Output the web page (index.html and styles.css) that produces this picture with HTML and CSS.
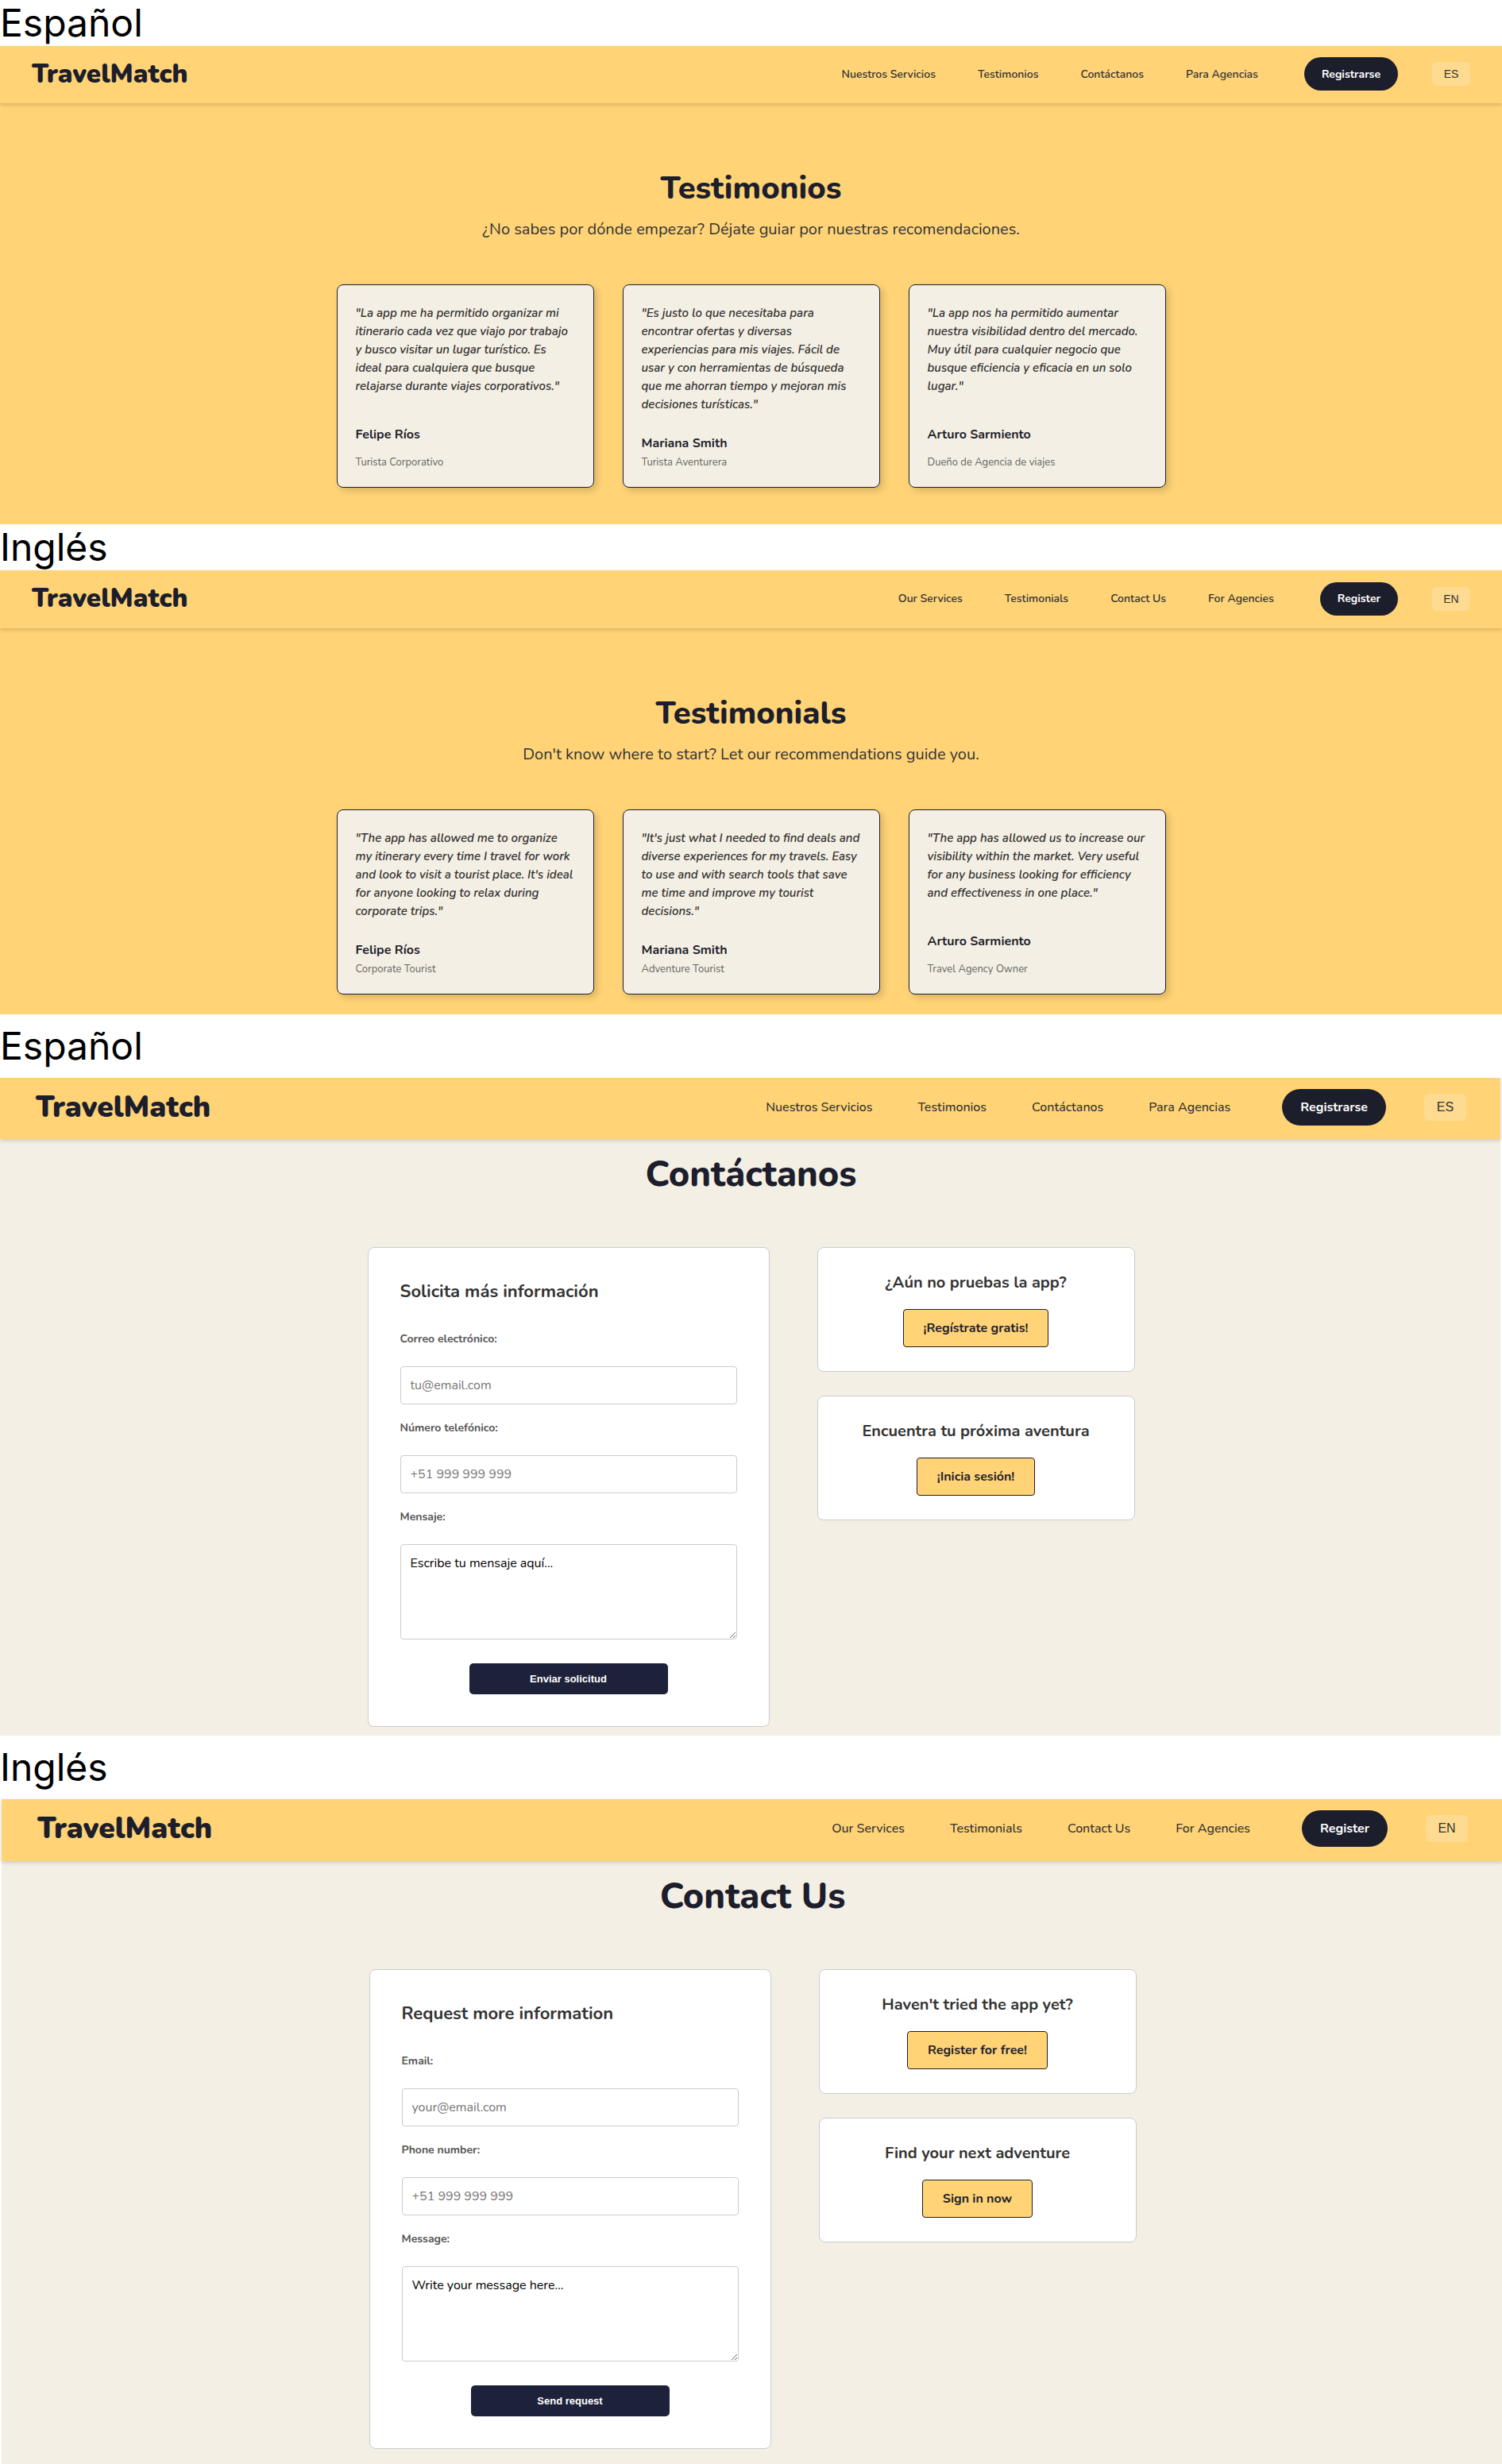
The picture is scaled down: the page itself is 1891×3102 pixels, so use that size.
FILE: index.html
```html
<!DOCTYPE html>
<html lang="es">
<head>
  <meta charset="utf-8">
  <meta name="viewport" content="width=device-width, initial-scale=1">
  <title>TravelMatch</title>
  <link rel="stylesheet" href="styles.css">
</head>
<body>

<p class="lang-label">Español</p>
<section class="screen screen-sun">
  <header class="header">
    <a class="logo" href="#">TravelMatch</a>
    <nav class="nav">
      <a class="nav-link" href="#">Nuestros Servicios</a>
      <a class="nav-link" href="#">Testimonios</a>
      <a class="nav-link" href="#">Contáctanos</a>
      <a class="nav-link" href="#">Para Agencias</a>
    </nav>
    <button class="register" type="button">Registrarse</button>
    <button class="lang" type="button">ES</button>
  </header>
  <div class="testimonials">
    <h1 class="title">Testimonios</h1>
    <p class="subtitle">¿No sabes por dónde empezar? Déjate guiar por nuestras recomendaciones.</p>
    <div class="cards">
      <article class="card">
        <p class="quote">"La app me ha permitido organizar mi itinerario cada vez que viajo por trabajo y busco visitar un lugar turístico. Es ideal para cualquiera que busque relajarse durante viajes corporativos."</p>
        <h2 class="name">Felipe Ríos</h2>
        <p class="role">Turista Corporativo</p>
      </article>
      <article class="card">
        <p class="quote">"Es justo lo que necesitaba para encontrar ofertas y diversas experiencias para mis viajes. Fácil de usar y con herramientas de búsqueda que me ahorran tiempo y mejoran mis decisiones turísticas."</p>
        <h2 class="name">Mariana Smith</h2>
        <p class="role">Turista Aventurera</p>
      </article>
      <article class="card">
        <p class="quote">"La app nos ha permitido aumentar nuestra visibilidad dentro del mercado. Muy útil para cualquier negocio que busque eficiencia y eficacia en un solo lugar."</p>
        <h2 class="name">Arturo Sarmiento</h2>
        <p class="role">Dueño de Agencia de viajes</p>
      </article>
    </div>
  </div>
</section>

<p class="lang-label">Inglés</p>
<section class="screen screen-sun screen-short" lang="en">
  <header class="header">
    <a class="logo" href="#">TravelMatch</a>
    <nav class="nav">
      <a class="nav-link" href="#">Our Services</a>
      <a class="nav-link" href="#">Testimonials</a>
      <a class="nav-link" href="#">Contact Us</a>
      <a class="nav-link" href="#">For Agencies</a>
    </nav>
    <button class="register" type="button">Register</button>
    <button class="lang" type="button">EN</button>
  </header>
  <div class="testimonials">
    <h1 class="title">Testimonials</h1>
    <p class="subtitle">Don't know where to start? Let our recommendations guide you.</p>
    <div class="cards">
      <article class="card">
        <p class="quote">"The app has allowed me to organize my itinerary every time I travel for work and look to visit a tourist place. It's ideal for anyone looking to relax during corporate trips."</p>
        <h2 class="name">Felipe Ríos</h2>
        <p class="role">Corporate Tourist</p>
      </article>
      <article class="card">
        <p class="quote">"It's just what I needed to find deals and diverse experiences for my travels. Easy to use and with search tools that save me time and improve my tourist decisions."</p>
        <h2 class="name">Mariana Smith</h2>
        <p class="role">Adventure Tourist</p>
      </article>
      <article class="card">
        <p class="quote">"The app has allowed us to increase our visibility within the market. Very useful for any business looking for efficiency and effectiveness in one place."</p>
        <h2 class="name">Arturo Sarmiento</h2>
        <p class="role">Travel Agency Owner</p>
      </article>
    </div>
  </div>
</section>

<p class="lang-label lang-label-tall">Español</p>
<section class="screen screen-sand screen-left">
  <header class="header header-large">
    <a class="logo" href="#">TravelMatch</a>
    <nav class="nav">
      <a class="nav-link" href="#">Nuestros Servicios</a>
      <a class="nav-link" href="#">Testimonios</a>
      <a class="nav-link" href="#">Contáctanos</a>
      <a class="nav-link" href="#">Para Agencias</a>
    </nav>
    <button class="register" type="button">Registrarse</button>
    <button class="lang" type="button">ES</button>
  </header>
  <div class="contact">
    <h1 class="title title-large">Contáctanos</h1>
    <div class="contact-grid">
      <form class="panel form">
        <h2 class="form-title">Solicita más información</h2>
        <label class="label" for="email-es">Correo electrónico:</label>
        <input class="field" id="email-es" type="email" placeholder="tu@email.com">
        <label class="label" for="phone-es">Número telefónico:</label>
        <input class="field" id="phone-es" type="tel" placeholder="+51 999 999 999">
        <label class="label" for="message-es">Mensaje:</label>
        <textarea class="field message" id="message-es">Escribe tu mensaje aquí...</textarea>
        <button class="send" type="button">Enviar solicitud</button>
      </form>
      <div class="side">
        <div class="panel promo">
          <h2 class="promo-title">¿Aún no pruebas la app?</h2>
          <button class="promo-button" type="button">¡Regístrate gratis!</button>
        </div>
        <div class="panel promo">
          <h2 class="promo-title">Encuentra tu próxima aventura</h2>
          <button class="promo-button" type="button">¡Inicia sesión!</button>
        </div>
      </div>
    </div>
  </div>
</section>

<p class="lang-label lang-label-tall">Inglés</p>
<section class="screen screen-sand screen-right" lang="en">
  <header class="header header-large">
    <a class="logo" href="#">TravelMatch</a>
    <nav class="nav">
      <a class="nav-link" href="#">Our Services</a>
      <a class="nav-link" href="#">Testimonials</a>
      <a class="nav-link" href="#">Contact Us</a>
      <a class="nav-link" href="#">For Agencies</a>
    </nav>
    <button class="register" type="button">Register</button>
    <button class="lang" type="button">EN</button>
  </header>
  <div class="contact">
    <h1 class="title title-large">Contact Us</h1>
    <div class="contact-grid">
      <form class="panel form">
        <h2 class="form-title">Request more information</h2>
        <label class="label" for="email-en">Email:</label>
        <input class="field" id="email-en" type="email" placeholder="your@email.com">
        <label class="label" for="phone-en">Phone number:</label>
        <input class="field" id="phone-en" type="tel" placeholder="+51 999 999 999">
        <label class="label" for="message-en">Message:</label>
        <textarea class="field message" id="message-en">Write your message here...</textarea>
        <button class="send" type="button">Send request</button>
      </form>
      <div class="side">
        <div class="panel promo">
          <h2 class="promo-title">Haven't tried the app yet?</h2>
          <button class="promo-button" type="button">Register for free!</button>
        </div>
        <div class="panel promo">
          <h2 class="promo-title">Find your next adventure</h2>
          <button class="promo-button" type="button">Sign in now</button>
        </div>
      </div>
    </div>
  </div>
</section>

</body>
</html>
```
FILE: styles.css
```css
:root {
  --sun: #ffd376;
  --sand: #f4efe4;
  --ink: #1d1e2c;
  --text: #333333;
  --line: #cccccc;
}

* {
  box-sizing: border-box;
}

body {
  margin: 0;
  background: #ffffff;
  color: var(--text);
  font-family: "Nunito", "Lato", sans-serif;
}

h1,
h2,
p {
  margin: 0;
}

button,
input,
textarea {
  font-family: inherit;
}

button {
  border: 0;
  padding: 0;
  cursor: pointer;
}

.lang-label {
  color: #000000;
  font: 400 48px/58px "Inter", sans-serif;
}

.lang-label-tall {
  line-height: 80px;
}

.screen-sun {
  background: var(--sun);
}

.screen-sand {
  background: var(--sand);
}

.screen-left {
  margin-right: 2px;
}

.screen-right {
  margin-left: 2px;
}

/* Header */

.header {
  display: flex;
  align-items: center;
  height: 72px;
  padding: 0 40px 2px;
  background: var(--sun);
  box-shadow: 0 2px 5px rgba(0, 0, 0, 0.16);
}

.screen-short .header {
  height: 73px;
}

.logo {
  margin-right: auto;
  color: var(--ink);
  font-size: 33px;
  font-weight: 900;
  text-decoration: none;
}

.nav {
  display: flex;
  gap: 53px;
  margin-right: 58px;
}

.nav-link {
  color: var(--text);
  font-size: 14px;
  font-weight: 600;
  text-decoration: none;
}

.register {
  height: 42px;
  margin-right: 43px;
  padding: 0 22px;
  border-radius: 21px;
  background: var(--ink);
  color: #ffffff;
  font-size: 14px;
  font-weight: 700;
}

.lang {
  width: 48px;
  height: 30px;
  border-radius: 6px;
  background: rgba(255, 255, 255, 0.2);
  color: var(--text);
  font-family: "Liberation Sans", Arial, sans-serif;
  font-size: 14px;
}

.header-large {
  height: 77px;
  padding: 0 43px 4px 45px;
}

.screen-right .header-large {
  height: 78px;
}

.header-large .logo {
  font-size: 37px;
}

.header-large .nav {
  gap: 57px;
  margin-right: 65px;
}

.header-large .nav-link {
  font-size: 16px;
  font-weight: 500;
}

.header-large .register {
  height: 46px;
  margin-right: 48px;
  padding: 0 23px;
  border-radius: 23px;
  font-size: 16px;
}

.header-large .lang {
  width: 53px;
  height: 34px;
  font-size: 16px;
}

/* Testimonials */

.testimonials {
  padding: 83px 24px 46px;
  text-align: center;
}

.screen-short .testimonials {
  padding-bottom: 25px;
}

.title {
  color: var(--ink);
  font-size: 40px;
  font-weight: 800;
  line-height: 48px;
}

.subtitle {
  margin: 14px 0 55px;
  font-size: 20px;
  line-height: 28px;
}

.cards {
  display: grid;
  grid-template-columns: repeat(3, 1fr);
  gap: 36px;
  max-width: 1044px;
  margin: 0 auto;
  text-align: left;
}

.card {
  display: flex;
  flex-direction: column;
  justify-content: space-between;
  padding: 24px 23px 22px;
  border: 1px solid var(--ink);
  border-radius: 8px;
  background: var(--sand);
  box-shadow: 4px 4px 8px rgba(0, 0, 0, 0.15);
}

.quote {
  margin-bottom: 25px;
  font-size: 15px;
  font-style: italic;
  font-weight: 600;
  line-height: 23px;
}

.name {
  margin-bottom: 3px;
  color: var(--ink);
  font-size: 16px;
  font-weight: 700;
  line-height: 24px;
}

.role {
  color: #666666;
  font-size: 13px;
  line-height: 18px;
}

/* Contact */

.contact {
  padding: 20px 22px 11px 24px;
}

.screen-right .contact {
  padding-bottom: 19px;
}

.title-large {
  margin-bottom: 66px;
  font-size: 45px;
  line-height: 50px;
  text-align: center;
}

.contact-grid {
  display: grid;
  grid-template-columns: 506fr 400fr;
  gap: 60px;
  align-items: start;
  max-width: 966px;
  margin: 0 auto;
}

.panel {
  border: 1px solid var(--line);
  border-radius: 8px;
  background: #ffffff;
}

.form {
  display: flex;
  flex-direction: column;
  padding: 40px;
}

.form-title {
  margin-bottom: 35px;
  font-size: 22px;
  font-weight: 700;
  line-height: 30px;
}

.label {
  margin-bottom: 24px;
  color: #555555;
  font-size: 14px;
  font-weight: 700;
  line-height: 20px;
}

.field {
  width: 100%;
  height: 48px;
  margin: 0 0 20px;
  padding: 12px;
  border: 1px solid var(--line);
  border-radius: 4px;
  background: #ffffff;
  color: #000000;
  font-size: 16px;
  line-height: 22px;
}

.field::placeholder {
  color: #757575;
}

.message {
  height: 120px;
  margin-bottom: 30px;
  resize: vertical;
}

.send {
  align-self: center;
  width: 250px;
  height: 39px;
  border-radius: 5px;
  background: #1e213a;
  color: #ffffff;
  font-family: "Liberation Sans", Arial, sans-serif;
  font-size: 13px;
  font-weight: 700;
}

.side {
  display: flex;
  flex-direction: column;
  gap: 30px;
}

.promo {
  padding: 31px 30px 30px;
  text-align: center;
}

.promo-title {
  margin-bottom: 20px;
  font-size: 20px;
  font-weight: 700;
  line-height: 26px;
}

.promo-button {
  display: block;
  height: 48px;
  margin: 0 auto;
  padding: 0 25px;
  border: 1px solid var(--ink);
  border-radius: 4px;
  background: var(--sun);
  color: var(--ink);
  font-size: 16px;
  font-weight: 700;
}
```
